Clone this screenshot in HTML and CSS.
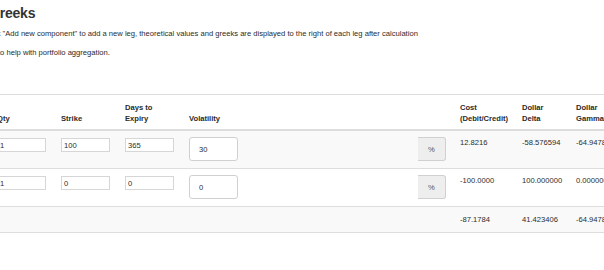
FILE: index.html
```html
<!DOCTYPE html>
<html>
<head>
<meta charset="utf-8">
<link rel="stylesheet" href="styles.css">
</head>
<body>
<div class="page">
  <h1 class="title">Greeks</h1>
  <p class="intro intro-first">Click "Add new component" to add a new leg, theoretical values and greeks are displayed to the right of each leg after calculation</p>
  <p class="intro intro-second">to help with portfolio aggregation.</p>
  <table class="legs">
    <colgroup>
      <col class="c-small"><col class="c-small"><col class="c-small"><col class="c-vol"><col class="c-cost"><col class="c-delta"><col class="c-greek"><col class="c-greek"><col class="c-greek">
    </colgroup>
    <thead>
      <tr>
        <th>Qty</th>
        <th>Strike</th>
        <th>Days to<br>Expiry</th>
        <th>Volatility</th>
        <th>Cost<br>(Debit/Credit)</th>
        <th>Dollar<br>Delta</th>
        <th>Dollar<br>Gamma</th>
        <th>Dollar<br>Vega</th>
        <th>Dollar<br>Theta</th>
      </tr>
    </thead>
    <tbody>
      <tr class="striped">
        <td><input class="field" type="text" value="1"></td>
        <td><input class="field" type="text" value="100"></td>
        <td><input class="field" type="text" value="365"></td>
        <td><div class="vol-group"><input class="vol-input" type="text" value="30"><span class="addon">%</span></div></td>
        <td>12.8216</td>
        <td>-58.576594</td>
        <td>-64.947812</td>
        <td>38.812003</td>
        <td>-5.213406</td>
      </tr>
      <tr>
        <td><input class="field" type="text" value="1"></td>
        <td><input class="field" type="text" value="0"></td>
        <td><input class="field" type="text" value="0"></td>
        <td><div class="vol-group"><input class="vol-input" type="text" value="0"><span class="addon">%</span></div></td>
        <td>-100.0000</td>
        <td>100.000000</td>
        <td>0.000000</td>
        <td>0.000000</td>
        <td>0.000000</td>
      </tr>
      <tr class="striped total">
        <td></td>
        <td></td>
        <td></td>
        <td></td>
        <td>-87.1784</td>
        <td>41.423406</td>
        <td>-64.947812</td>
        <td>38.812003</td>
        <td>-5.213406</td>
      </tr>
    </tbody>
  </table>
</div>
</body>
</html>
```
FILE: styles.css
```css
html, body {
  margin: 0;
  padding: 0;
  background: #fff;
  overflow: hidden;
}
body {
  font-family: "Liberation Sans", Arial, sans-serif;
  color: #2b2b2b;
  font-size: 7.6px;
}
.page {
  width: 900px;
}
.title {
  margin: 0 0 0 -11px;
  padding-top: 5px;
  font-size: 14px;
  line-height: 16px;
  font-weight: bold;
  letter-spacing: -0.2px;
  color: #333;
}
.intro {
  margin: 0;
  line-height: 11px;
  white-space: nowrap;
}
.intro-first {
  margin-top: 7px;
  margin-left: -16px;
}
.intro-second {
  margin-top: 8px;
  margin-left: -2px;
}
.legs {
  margin-top: 36px;
  margin-left: -10px;
  border-collapse: collapse;
  table-layout: fixed;
  width: 789px;
  border-top: 1px solid #ddd;
  border-bottom: 1px solid #ddd;
}
.c-small { width: 64px; }
.c-vol { width: 271px; }
.c-cost { width: 62px; }
.c-delta { width: 54px; }
.c-greek { width: 70px; }
.legs th,
.legs td {
  padding: 6px 8px 7px 7px;
  line-height: 11px;
  text-align: left;
  white-space: nowrap;
}
.legs th {
  font-weight: bold;
  vertical-align: bottom;
  border-bottom: 2px solid #ddd;
  padding-top: 7px;
  padding-bottom: 5px;
}
.legs td {
  vertical-align: top;
  border-top: 1px solid #ddd;
}
.legs tbody tr:first-child td {
  border-top: 0;
}
.striped {
  background: #f9f9f9;
}
.total td {
  padding-top: 7px;
  padding-bottom: 7px;
}
.field {
  display: block;
  box-sizing: border-box;
  width: 49px;
  height: 14px;
  margin: 1px 0 0 0;
  padding: 0 2px;
  border: 1px solid #d6d6d6;
  border-radius: 0;
  background: #fff;
  font-family: "Liberation Sans", Arial, sans-serif;
  font-size: 7.6px;
  color: #2b2b2b;
  outline: none;
}
.vol-group {
  display: flex;
  justify-content: space-between;
  width: 257px;
}
.vol-input {
  box-sizing: border-box;
  width: 49px;
  height: 24px;
  margin: 0;
  padding: 0 9px;
  border: 1px solid #d0d0d0;
  border-radius: 3px;
  background: #fff;
  font-family: "Liberation Sans", Arial, sans-serif;
  font-size: 7.6px;
  color: #2b2b2b;
  outline: none;
}
.addon {
  box-sizing: border-box;
  display: flex;
  align-items: center;
  justify-content: center;
  width: 28px;
  height: 24px;
  background: #eee;
  border: 1px solid #d0d0d0;
  border-left: 0;
  border-radius: 0 3px 3px 0;
  color: #555;
  font-size: 7.6px;
}
```
